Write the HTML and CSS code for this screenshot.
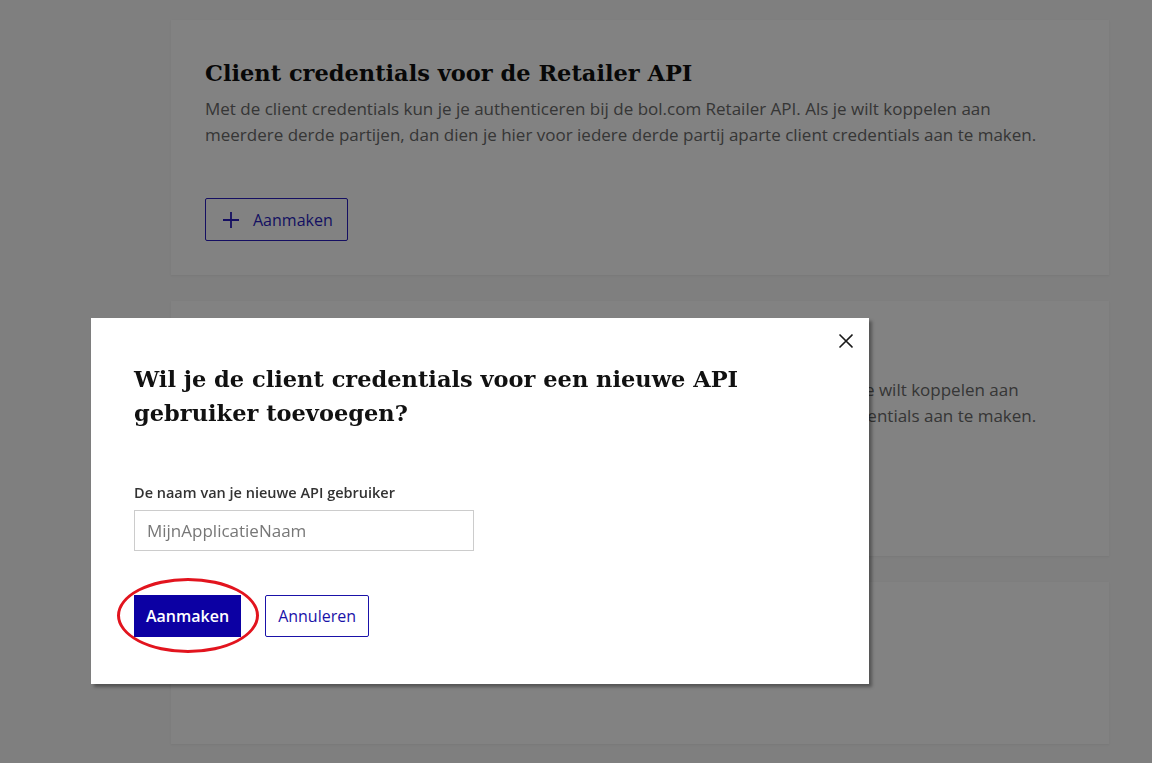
FILE: index.html
```html
<!DOCTYPE html>
<html lang="nl">
<head>
  <meta charset="UTF-8" />
  <title>API instellingen</title>
  <link rel="stylesheet" href="styles.css">
</head>
<body>
  <div class="page">
    <!-- Retailer API -->
    <div class="card">
      <h2>Client credentials voor de Retailer API</h2>
      <p class="intro">Met de client credentials kun je je authenticeren bij de bol.com Retailer API. Als je wilt koppelen aan meerdere derde partijen, dan dien je hier voor iedere derde partij aparte client credentials aan te maken.</p>
      <button class="btn-outline">
        <svg width="18" height="18" viewBox="0 0 18 18"><path d="M9 1 V17 M1 9 H17" stroke="currentColor" stroke-width="1.8" fill="none"/></svg>
        Aanmaken
      </button>
    </div>

    <!-- Advertiser API -->
    <div class="card">
      <h2>Client credentials voor de Advertising API</h2>
      <p class="intro">Met de client credentials kun je je authenticeren bij de bol.com Advertising API. Als je wilt koppelen aan meerdere derde partijen, dan dien je hier voor iedere derde partij aparte client credentials aan te maken.</p>
      <button class="btn-outline">
        <svg width="18" height="18" viewBox="0 0 18 18"><path d="M9 1 V17 M1 9 H17" stroke="currentColor" stroke-width="1.8" fill="none"/></svg>
        Aanmaken
      </button>
    </div>

    <!-- Overige -->
    <div class="card card-small">
      <h2>Webhooks</h2>
    </div>
  </div>

  <div class="overlay"></div>

  <div class="modal">
    <button class="close" aria-label="Sluiten">
      <svg width="16" height="16" viewBox="0 0 16 16"><path d="M1.5 1.5 L14.5 14.5 M14.5 1.5 L1.5 14.5" stroke="#1a1a1a" stroke-width="1.6" fill="none"/></svg>
    </button>
    <h1>Wil je de client credentials voor een nieuwe API gebruiker toevoegen?</h1>
    <label class="field-label" for="api-name">De naam van je nieuwe API gebruiker</label>
    <input type="text" id="api-name" class="field" placeholder="MijnApplicatieNaam" />
    <div class="actions">
      <div class="highlight">
        <button class="btn-primary">Aanmaken</button>
      </div>
      <button class="btn-secondary">Annuleren</button>
    </div>
  </div>
</body>
</html>
```

FILE: styles.css
```css
body {
  margin: 0;
  background: #f9f9f9;
  font-family: 'Open Sans', sans-serif;
  color: #666;
  height: 763px;
  overflow: hidden;
}

.page {
  padding: 20px 0 0 171px;
  display: flex;
  flex-direction: column;
  gap: 26px;
  width: 938px;
}

.card {
  background: #fff;
  box-shadow: 0 1px 2px rgba(0,0,0,0.06);
  padding: 38px 34px 32px 34px;
  height: 185px;
}

.card-small {
  height: 92px;
}

.card h2 {
  margin: 0 0 8px 0;
  font-family: 'DejaVu Serif', serif;
  font-size: 22.5px;
  line-height: 30px;
  color: #111;
}

.intro {
  margin: 0;
  max-width: 850px;
  font-size: 17px;
  line-height: 26px;
  color: #6a6a6a;
}

.btn-outline {
  margin-top: 50px;
  height: 43px;
  padding: 0 14px 0 16px;
  background: #fff;
  border: 1px solid #2a1fc0;
  border-radius: 2px;
  color: #2a1fc0;
  font-family: 'Open Sans', sans-serif;
  font-size: 16px;
  display: flex;
  align-items: center;
  gap: 13px;
}

.overlay {
  position: fixed;
  inset: 0;
  background: rgba(0,0,0,0.49);
}

.modal {
  position: absolute;
  left: 91px;
  top: 318px;
  width: 692px;
  height: 290px;
  padding: 38px 43px 38px 43px;
  background: #fff;
  box-shadow: 3px 3px 3px rgba(0,0,0,0.35);
}

.close {
  position: absolute;
  top: 9px;
  right: 9px;
  width: 28px;
  height: 28px;
  padding: 0;
  border: none;
  background: none;
  display: flex;
  align-items: center;
  justify-content: center;
}

.modal h1 {
  margin: 6px 0 0 0;
  font-family: 'DejaVu Serif', serif;
  font-size: 22.5px;
  line-height: 34px;
  color: #111;
  width: 620px;
}

.field-label {
  display: block;
  margin-top: 53px;
  font-size: 14.5px;
  font-weight: 600;
  color: #333;
}

.field {
  display: block;
  margin-top: 8px;
  width: 340px;
  height: 41px;
  box-sizing: border-box;
  padding: 0 12px;
  border: 1px solid #ccc;
  font-family: 'Open Sans', sans-serif;
  font-size: 17px;
}

.field::placeholder {
  color: #777;
}

.actions {
  margin-top: 44px;
  display: flex;
  align-items: center;
  gap: 24px;
}

.highlight {
  position: relative;
}

.highlight::after {
  content: '';
  position: absolute;
  left: -17px;
  top: -17px;
  width: 142px;
  height: 75px;
  border: 3px solid #e2141e;
  border-radius: 50%;
  box-sizing: border-box;
}

.btn-primary {
  height: 42px;
  padding: 0 12px;
  background: #0c00a3;
  border: none;
  color: #fff;
  font-family: 'Open Sans', sans-serif;
  font-size: 16px;
  font-weight: 600;
}

.btn-secondary {
  height: 42px;
  padding: 0 12px;
  background: #fff;
  border: 1px solid #1a12a8;
  border-radius: 2px;
  color: #1a12a8;
  font-family: 'Open Sans', sans-serif;
  font-size: 16px;
}
```
